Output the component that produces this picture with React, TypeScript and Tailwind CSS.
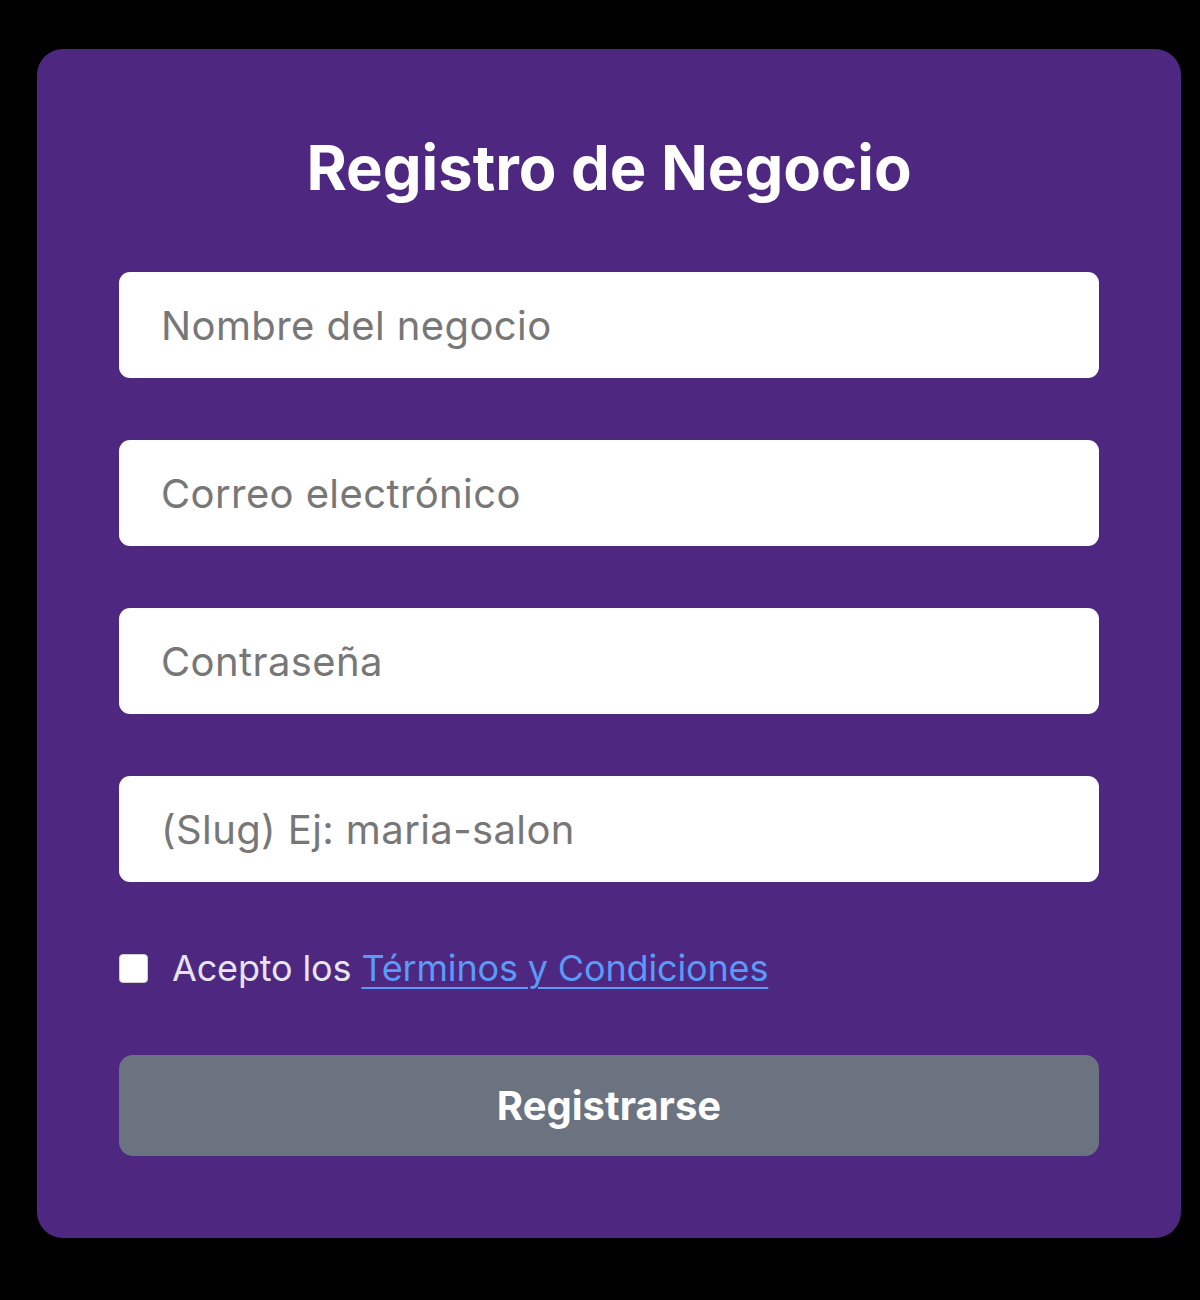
export default function App() {
  const fields = [
    { placeholder: "Nombre del negocio", type: "text" },
    { placeholder: "Correo electrónico", type: "email" },
    { placeholder: "Contraseña", type: "password" },
    { placeholder: "(Slug) Ej: maria-salon", type: "text" },
  ];

  return (
    <div className="min-h-[1300px] w-[1200px] bg-black font-['Inter',sans-serif] pt-[49px] pl-[37px]">
      <form
        onSubmit={(e) => e.preventDefault()}
        className="w-[1144px] h-[1189px] rounded-[26px] bg-[#4e2781] px-[82px] pt-[83px] flex flex-col"
      >
        <h1 className="text-center text-white font-bold text-[61.5px] leading-[72px]">
          Registro de Negocio
        </h1>

        <div className="mt-[68px] flex flex-col gap-[62px]">
          {fields.map((f) => (
            <input
              key={f.placeholder}
              type={f.type}
              placeholder={f.placeholder}
              className="h-[106px] w-full rounded-[11px] bg-white px-[42px] text-[40px] tracking-[0.4px] text-[#333] placeholder:text-[#777] outline-none"
            />
          ))}
        </div>

        {/* terms */}
        <label className="mt-[64px] h-[44px] flex items-center gap-[24px] text-[36px] leading-[44px] text-[#e6e4ec]">
          <input
            type="checkbox"
            className="appearance-none w-[29px] h-[29px] rounded-[4px] bg-white border border-[#cfcfcf] shrink-0"
          />
          <span className="tracking-[-0.15px]">
            Acepto los{" "}
            <a href="#" className="text-[#5a9bf8] underline underline-offset-[6px] decoration-[2px]">
              Términos y Condiciones
            </a>
          </span>
        </label>

        <button
          type="submit"
          className="mt-[65px] h-[101px] w-full rounded-[14px] bg-[#6b7280] text-white font-bold text-[40px]"
        >
          Registrarse
        </button>
      </form>
    </div>
  );
}
